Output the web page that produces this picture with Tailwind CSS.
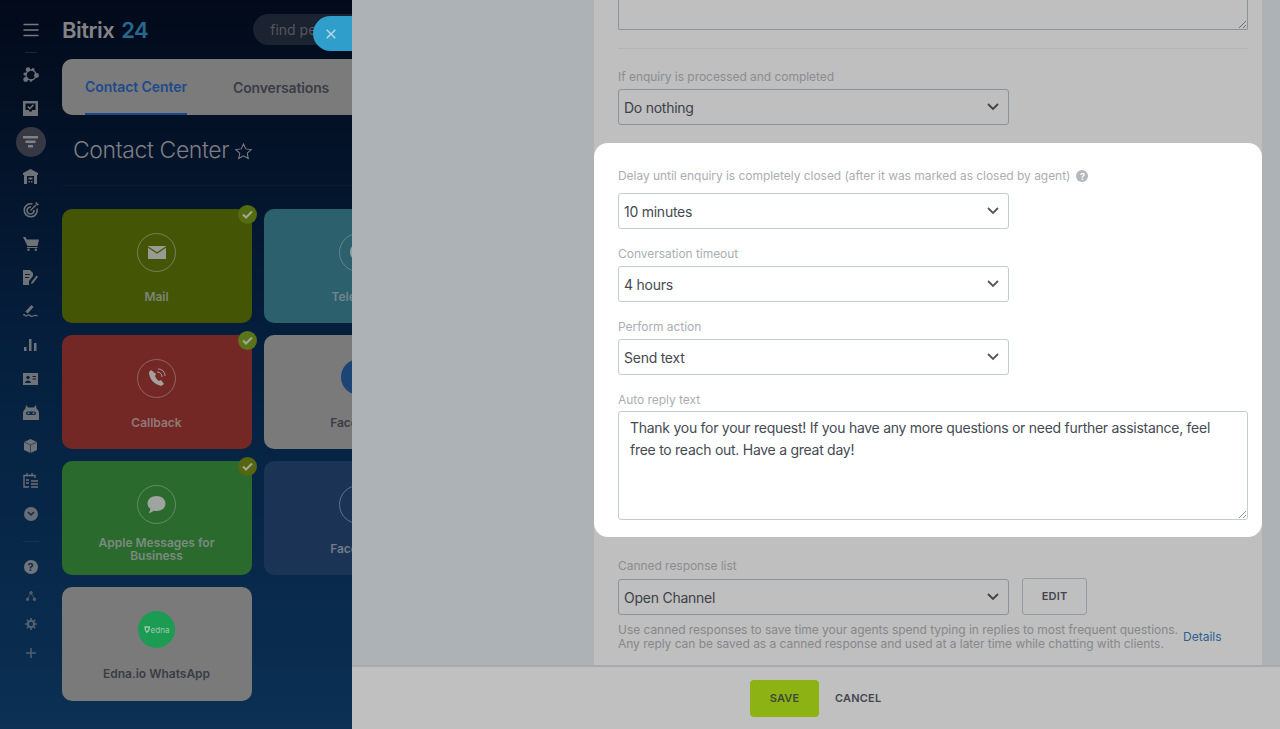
<!DOCTYPE html>
<html lang="en"><head><meta charset="utf-8"><title>Contact Center</title>
<script src="https://cdn.jsdelivr.net/npm/@tailwindcss/browser@4"></script></head>
<body class="m-0 overflow-hidden font-['Inter','Liberation_Sans',sans-serif]">
<div class="flex h-[729px] w-[1280px] overflow-hidden">
  <!-- LEFT dimmed app -->
  <div class="relative flex w-[352px] shrink-0 overflow-hidden bg-gradient-to-b from-[#020a1a] via-[#05203f] to-[#0b3053]">
    <nav class="flex w-[62px] shrink-0 flex-col items-center pr-[1px] text-[#6f7277]">
      <svg class="mt-[23px] h-[14px] w-[16px] shrink-0 text-[#77797e]" viewBox="0 0 16 14" fill="none" stroke="currentColor" stroke-width="1.500"><path d="M.5 1.500h15M.5 7h15M.5 12.500h15"/></svg>
      <div class="mt-[15px] h-px w-[12px] shrink-0 bg-[#20252f]"></div>
      <div class="mt-[5px] flex h-[33.770px] shrink-0 items-center">
        <svg class="h-[16px] w-[16px]" viewBox="0 0 16 16"><circle cx="8" cy="8" r="5" fill="none" stroke="currentColor" stroke-width="1.300"/><g fill="currentColor"><circle cx="5" cy="2.500" r="2.300"/><circle cx="13.500" cy="8.500" r="2.400"/><circle cx="2.700" cy="12.500" r="2.400"/><circle cx="2" cy="7" r="1.600"/><circle cx="10" cy="2.500" r="1.500"/><circle cx="8" cy="13.500" r="1.300"/></g></svg>
      </div>
      <div class="flex h-[33.770px] shrink-0 items-center">
        <svg class="h-[15px] w-[15px]" viewBox="0 0 15 15"><path fill="currentColor" d="M0 0h15v15H0z"/><path fill="#040f20" d="M2.500 2.500h10v6.500h-3.500v1.500h-3V9H2.500z"/><path fill="none" stroke="currentColor" stroke-width="1.600" d="m4.800 5.500 2 2 3.700-3.700"/></svg>
      </div>
      <div class="flex h-[33.770px] shrink-0 items-center">
        <div class="flex h-[30px] w-[30px] items-center justify-center rounded-full bg-[#363944]">
          <svg class="h-[12px] w-[15px]" viewBox="0 0 15 12" fill="#808285"><path d="M0 0h15v2.500H0zM2.500 4.500h10V7h-10zM5 9h5v2.500H5z"/></svg>
        </div>
      </div>
      <div class="flex h-[33.770px] shrink-0 items-center">
        <svg class="h-[15px] w-[15px]" viewBox="0 0 15 15" fill="currentColor"><path fill-rule="evenodd" d="M7.500 0 15 4v2h-1v9H1V6H0V4zM4 7v8h7V7zM5.500 8.500h4v2h-4z"/><path d="M5.500 12h1.500v1.500H5.500zM8 12h1.500v1.500H8z"/></svg>
      </div>
      <div class="flex h-[33.770px] shrink-0 items-center">
        <svg class="h-[16px] w-[16px]" viewBox="0 0 16 16" fill="none" stroke="currentColor" stroke-width="1.600"><path d="M14 6.500A6.500 6.500 0 1 1 9.500 2"/><path d="M11 8a3.500 3.500 0 1 1-3-3"/><path stroke-width="1.300" d="M7.500 8.500 13 3"/><path fill="currentColor" stroke="none" d="M12 1l1 .8.200 1.200L15 3.500 16 2l-1.500-.3L14 0z"/></svg>
      </div>
      <div class="flex h-[33.770px] shrink-0 items-center">
        <svg class="h-[14px] w-[16px]" viewBox="0 0 16 14" fill="currentColor"><path d="M0 0h2.500l1.300 2.500H16L14.500 9H4.500z"/><path d="M4 10h10.500v1H4z"/><circle cx="5.500" cy="12.800" r="1.200"/><circle cx="12.800" cy="12.800" r="1.200"/></svg>
      </div>
      <div class="flex h-[33.770px] shrink-0 items-center">
        <svg class="h-[15px] w-[15px]" viewBox="0 0 15 15" fill="currentColor"><path d="M0 0h7l3 3v3l-4 5v4H0z"/><path fill="#06203e" d="M2 4h5v1H2zM2 7h4v1H2z"/><path d="m8.500 12 5-6.500 1.500 1.200-5 6.500-2 .8z"/></svg>
      </div>
      <div class="flex h-[33.770px] shrink-0 items-center">
        <svg class="h-[14px] w-[15px]" viewBox="0 0 15 14" fill="none" stroke="currentColor"><path stroke-width="3" d="m3.500 8.500 6-6.500"/><path stroke-width="1.200" d="M0 11c1.500-1.500 2 1.500 3.500 1s2-2 3.500-.5 2 1 3.500.3 2.500-.3 4 0"/></svg>
      </div>
      <div class="flex h-[33.770px] shrink-0 items-center">
        <svg class="h-[12px] w-[13px]" viewBox="0 0 13 12" fill="currentColor"><path d="M0 8h2.500v4H0zM5 0h2.500v12H5zM10 4h2.500v8H10z"/></svg>
      </div>
      <div class="flex h-[33.770px] shrink-0 items-center">
        <svg class="h-[12px] w-[15px]" viewBox="0 0 15 12"><path fill="currentColor" d="M0 0h15v12H0z"/><circle cx="5" cy="4.500" r="1.700" fill="#07213f"/><path fill="#07213f" d="M2 10c0-3.500 6-3.500 6 0zM9.500 3H13v1H9.500zM9.500 5.500H13v1H9.500z"/></svg>
      </div>
      <div class="flex h-[33.770px] shrink-0 items-center">
        <svg class="h-[15px] w-[16px]" viewBox="0 0 16 15"><path fill="currentColor" d="M3 0l2.200 2.500h5.600L13 0l.5 3.500C15 4.500 16 6.500 16 8.500V15H0V8.500c0-2 1-4 2.500-5z"/><rect x="3" y="6.500" width="10" height="3.500" rx="1.700" fill="#0a2a4b"/><circle cx="5.500" cy="8.200" r="1" fill="currentColor"/><circle cx="10.500" cy="8.200" r="1" fill="currentColor"/></svg>
      </div>
      <div class="flex h-[33.770px] shrink-0 items-center">
        <svg class="h-[14px] w-[13px]" viewBox="0 0 13 14" fill="currentColor"><path d="M6.500 0 13 3v8l-6.500 3L0 11V3z"/><path fill="none" stroke="#0a2d50" stroke-width=".6" d="m0 3 6.500 3L13 3M6.500 6v8"/></svg>
      </div>
      <div class="flex h-[33.770px] shrink-0 items-center">
        <svg class="h-[15px] w-[15px]" viewBox="0 0 15 15" fill="none" stroke="currentColor" stroke-width="1.300"><path d="M4 0v3.500M9 0v3.500M6 14H1V2.500h11V5"/><path stroke-width="1.500" d="M8 8h7M8 11h7M8 14h7M3 7h3M3 10h3"/></svg>
      </div>
      <div class="flex h-[33.770px] shrink-0 items-center">
        <span class="flex h-[14px] w-[14px] items-center justify-center rounded-full bg-[#676c75]">
          <svg class="h-[6px] w-[8px]" viewBox="0 0 8 6" fill="none" stroke="#0c2b4a" stroke-width="1.500"><path d="m1 1 3 3 3-3"/></svg>
        </span>
      </div>
      <div class="mt-[10px] h-px w-[16px] shrink-0 bg-[#15324f]"></div>
      <div class="mt-[11px] flex h-[28.700px] shrink-0 items-center">
        <span class="flex h-[14px] w-[14px] items-center justify-center rounded-full bg-[#70757c] text-[11px] font-bold leading-none text-[#0a2b4c]">?</span>
      </div>
      <div class="flex h-[28.700px] shrink-0 items-center">
        <svg class="h-[10px] w-[10px] text-[#555f6c]" viewBox="0 0 10 10" fill="currentColor" stroke="currentColor" stroke-width=".7"><circle cx="5" cy="1.800" r="1.400"/><circle cx="1.500" cy="8.300" r="1.400"/><circle cx="8.500" cy="8.300" r="1.400"/><path fill="none" d="M5 2 1.500 8M5 2l3.500 6"/></svg>
      </div>
      <div class="flex h-[28.700px] shrink-0 items-center">
        <svg class="h-[12px] w-[12px] text-[#555f6c]" viewBox="0 0 12 12"><circle cx="6" cy="6" r="3.300" fill="none" stroke="currentColor" stroke-width="2"/><path stroke="currentColor" stroke-width="1.600" d="M6 0v12M0 6h12M1.800 1.800l8.400 8.400M10.200 1.800l-8.400 8.400"/><circle cx="6" cy="6" r="2" fill="#0b2c4d"/></svg>
      </div>
      <div class="flex h-[28.700px] shrink-0 items-center">
        <svg class="h-[10px] w-[10px] text-[#555f6c]" viewBox="0 0 10 10" stroke="currentColor" stroke-width="1.500"><path d="M5 0v10M0 5h10"/></svg>
      </div>
    </nav>
    <main class="w-[290px] shrink-0">
      <header class="flex h-[59px] items-center">
        <span class="text-[22px] font-semibold leading-none tracking-[-0.5px] text-[#838486]">Bitrix</span>
        <span class="ml-[7px] text-[22px] font-semibold leading-none tracking-[-0.5px] text-[#266a8d]">24</span>
        <svg class="ml-[10px] h-[10px] w-[13px]" viewBox="0 0 12 10" fill="none" stroke="#6f7174"><path d="M0 2.500h12M0 7.500h12"/><circle cx="8" cy="2.500" r="1.300" fill="#071122"/><circle cx="4" cy="7.500" r="1.300" fill="#071122"/></svg>
        <div class="ml-[95px] flex h-[31px] w-[120px] shrink-0 items-center rounded-full bg-[#1b2230] pl-[17px] text-[14px] text-[#55585f]">find people</div>
      </header>
      <div class="flex h-[56px] items-start rounded-l-[10px] bg-[#7b7b7b]">
        <div class="ml-[23px] flex h-[56px] w-[102px] items-center justify-center whitespace-nowrap border-b-2 border-[#1b4689] text-[14px] font-semibold tracking-[-0.06px] text-[#1f4a8b]">Contact Center</div>
        <div class="ml-[46px] flex h-[56px] items-center text-[14px] font-semibold tracking-[-0.15px] text-[#393d46]">Conversations</div>
      </div>
      <div class="flex h-[71px] items-center border-b border-[#0f1a2c] pl-[11px] text-[#7d7f82]">
        <span class="text-[23px] font-light leading-none tracking-[-0.4px]">Contact Center</span>
        <svg class="ml-[5px] mt-[2px] h-[19px] w-[19px]" viewBox="0 0 24 24" fill="none" stroke="currentColor" stroke-width="1.300"><path d="m12 2.500 2.900 6.200 6.800.8-5 4.600 1.300 6.700-6-3.300-6 3.300 1.300-6.700-5-4.600 6.800-.8z"/></svg>
      </div>
      <div class="mt-[23px] grid w-[392px] grid-cols-[190px_190px] gap-x-[12px] gap-y-[12.500px]">
        <div class="relative flex h-[113.500px] flex-col items-center rounded-[10px] bg-[#445606] pr-[1px] pt-[23.500px] text-[#7f8375]">
          <div class="flex h-[39px] w-[39px] items-center justify-center rounded-full border border-[#75805a]"><svg class="h-[13px] w-[18px]" viewBox="0 0 18 13"><path fill="#999a92" d="M0 0h18v13H0z"/><path fill="none" stroke="#445606" stroke-width="1.200" d="m0 1 9 6 9-6"/></svg></div>
          <span class="mt-[18px] text-[12px] font-semibold leading-[13px]">Mail</span>
          <span class="absolute right-[-5px] top-[-4px] flex h-[19px] w-[19px] items-center justify-center rounded-full bg-[#546b10]"><svg class="h-[9px] w-[11px]" viewBox="0 0 11 9" fill="none" stroke="#a5a796" stroke-width="2"><path d="m1 4.500 3 3 6-6"/></svg></span>
        </div>
        <div class="relative flex h-[113.500px] flex-col items-center rounded-[10px] bg-[#2b606c] pr-[1px] pt-[23.500px] text-[#74858b]">
          <div class="flex h-[39px] w-[39px] items-center justify-center rounded-full border border-[#5f8791]"><svg class="h-[18px] w-[18px]" viewBox="0 0 18 18"><circle cx="9" cy="9" r="9" fill="#90a3a8"/></svg></div>
          <span class="mt-[18px] text-[12px] font-semibold leading-[13px]">Telegram</span>
        </div>
        <div class="relative flex h-[113.500px] flex-col items-center rounded-[10px] bg-[#742826] pr-[1px] pt-[23.500px] text-[#8f7a78]">
          <div class="flex h-[39px] w-[39px] items-center justify-center rounded-full border border-[#8f6664]"><svg class="h-[20px] w-[20px]" viewBox="0 0 20 20"><path fill="#a79f9f" d="M4 2 2 4c0 7 5 12 12 14l3-2-3-4-2 1c-2-1-3-3-4-5l1-2z"/><path fill="none" stroke="#a79f9f" stroke-width="1" d="M10 4c3 0 5 2 5 5M11 1c4 0 7 3 7 7"/></svg></div>
          <span class="mt-[18px] text-[12px] font-semibold leading-[13px]">Callback</span>
          <span class="absolute right-[-5px] top-[-4px] flex h-[19px] w-[19px] items-center justify-center rounded-full bg-[#5a7419]"><svg class="h-[9px] w-[11px]" viewBox="0 0 11 9" fill="none" stroke="#a5a796" stroke-width="2"><path d="m1 4.500 3 3 6-6"/></svg></span>
        </div>
        <div class="relative flex h-[113.500px] flex-col items-center rounded-[10px] bg-[#7a7a7a] pr-[1px] pt-[23.500px] text-[#393d46]">
          <div class="flex h-[36px] w-[36px] items-center justify-center rounded-full bg-[#1c4474]"></div>
          <span class="mt-[21px] whitespace-nowrap text-[12px] font-semibold leading-[13px]">Facebook</span>
        </div>
        <div class="relative flex h-[113.500px] flex-col items-center rounded-[10px] bg-[#2a6a2c] pr-[1px] pt-[23.500px] text-[#7a8b80]">
          <div class="flex h-[39px] w-[39px] items-center justify-center rounded-full border border-[#648c68]"><svg class="h-[19px] w-[19px]" viewBox="0 0 19 19"><path fill="#9ea49f" d="M9.500 1c5 0 9 3 9 7.500S14.500 16 9.500 16c-1 0-2 0-3-.3C5 17 3 18 1.500 18c1-1 2-3 1.800-4.300C1.500 12.500.5 10.500.5 8.500.5 4 4.500 1 9.500 1z"/></svg></div>
          <span class="mt-[12px] w-[130px] text-center text-[12px] font-semibold leading-[13px]">Apple Messages for Business</span>
          <span class="absolute right-[-5px] top-[-4px] flex h-[19px] w-[19px] items-center justify-center rounded-full bg-[#56650f]"><svg class="h-[9px] w-[11px]" viewBox="0 0 11 9" fill="none" stroke="#a5a796" stroke-width="2"><path d="m1 4.500 3 3 6-6"/></svg></span>
        </div>
        <div class="relative flex h-[113.500px] flex-col items-center rounded-[10px] bg-[#1b3456] pr-[1px] pt-[23.500px] text-[#757c88]">
          <div class="flex h-[39px] w-[39px] items-center justify-center rounded-full border border-[#5f7290]"></div>
          <span class="mt-[18px] whitespace-nowrap text-[12px] font-semibold leading-[13px]">Facebook</span>
        </div>
        <div class="relative flex h-[113.500px] flex-col items-center rounded-[10px] bg-[#7a7a7a] pr-[1px] pt-[24px] text-[#393d46]">
          <div class="flex h-[37px] w-[37px] items-center justify-center gap-[1px] rounded-full bg-[#1c9b52] text-[8px] leading-none text-[#9cc9ae]"><svg class="h-[7px] w-[6px]" viewBox="0 0 6 7" fill="none" stroke="#9cc9ae" stroke-width="1.300"><path d="M1 1h4.300c0 3-1 4.500-2.500 5.300C1.500 5 1 3.500 1 1z"/></svg><span>edna</span></div>
          <span class="mt-[19px] text-[12px] font-semibold leading-[13px]">Edna.io WhatsApp</span>
        </div>
      </div>
    </main>
    <button class="absolute left-[313px] top-[16px] flex h-[35px] w-[39px] items-center justify-center rounded-l-full bg-[#2f9ecb] pr-[3px]">
      <svg class="h-[10px] w-[10px]" viewBox="0 0 10 10" stroke="#b6dcec" stroke-width="1.400"><path d="m.7.7 8.600 8.600M9.300.7.700 9.300"/></svg>
    </button>
  </div>
  <!-- RIGHT slider -->
  <div class="flex w-[928px] shrink-0 flex-col bg-[#adb2b6]">
    <div class="ml-[242px] h-[665px] w-[668px] shrink-0 overflow-hidden bg-[#bfbfbf]">
      <div class="pl-[24px] pr-[14px]">
        <div class="relative h-[30px] rounded-b-[2px] border-x border-b border-[#8e9398]">
          <svg class="absolute bottom-0 right-0 h-[9px] w-[9px]" viewBox="0 0 9 9" stroke="#5b5f66" stroke-width=".8"><path d="m1 8 7-7M5 8l3-3"/></svg>
        </div>
        <div class="mt-[18px] h-px bg-[#b5b5b5]"></div>
        <div class="mt-[21px] text-[12px] leading-[14px] tracking-[-0.04px] text-[#8b8d8f]">If enquiry is processed and completed</div>
        <div class="mt-[5px] flex h-[36px] w-[391px] items-center justify-between rounded-[3px] border border-[#8d9297] pl-[5px] pr-[9px] text-[14px] tracking-[-0.25px] text-[#3c4149]">
          <span>Do nothing</span>
          <svg class="h-[8px] w-[12px]" viewBox="0 0 12 8" fill="none" stroke="#3f444c" stroke-width="1.800"><path d="m1 1 5 5 5-5"/></svg>
        </div>
      </div>
      <section class="mt-[18px] h-[394px] rounded-[14px] bg-white pl-[24px] pr-[14px] pt-[26px]">
        <div class="flex h-[14px] items-center text-[12px] leading-[14px] tracking-[-0.04px] text-[#aaaeb2]">
          <span>Delay until enquiry is completely closed (after it was marked as closed by agent)</span>
          <span class="ml-[6px] flex h-[12px] w-[12px] items-center justify-center rounded-full bg-[#b4b7bb] text-[9px] font-bold leading-none text-white">?</span>
        </div>
        <div class="mt-[10px] flex h-[36px] w-[391px] items-center justify-between rounded-[3px] border border-[#c6cbd0] pl-[5px] pr-[9px] text-[14px] tracking-[-0.25px] text-[#454a52]">
          <span>10 minutes</span>
          <svg class="h-[8px] w-[12px]" viewBox="0 0 12 8" fill="none" stroke="#525860" stroke-width="1.800"><path d="m1 1 5 5 5-5"/></svg>
        </div>
        <div class="mt-[18px] text-[12px] leading-[14px] tracking-[-0.04px] text-[#aaaeb2]">Conversation timeout</div>
        <div class="mt-[5px] flex h-[36px] w-[391px] items-center justify-between rounded-[3px] border border-[#c6cbd0] pl-[5px] pr-[9px] text-[14px] tracking-[-0.25px] text-[#454a52]">
          <span>4 hours</span>
          <svg class="h-[8px] w-[12px]" viewBox="0 0 12 8" fill="none" stroke="#525860" stroke-width="1.800"><path d="m1 1 5 5 5-5"/></svg>
        </div>
        <div class="mt-[18px] text-[12px] leading-[14px] tracking-[-0.04px] text-[#aaaeb2]">Perform action</div>
        <div class="mt-[5px] flex h-[36px] w-[391px] items-center justify-between rounded-[3px] border border-[#c6cbd0] pl-[5px] pr-[9px] text-[14px] tracking-[-0.25px] text-[#454a52]">
          <span>Send text</span>
          <svg class="h-[8px] w-[12px]" viewBox="0 0 12 8" fill="none" stroke="#525860" stroke-width="1.800"><path d="m1 1 5 5 5-5"/></svg>
        </div>
        <div class="mt-[18px] text-[12px] leading-[14px] tracking-[-0.04px] text-[#aaaeb2]">Auto reply text</div>
        <div class="relative mt-[4px] h-[109px] rounded-[3px] border border-[#c6cbd0] px-[11px] pt-[5px] text-[14px] leading-[22px] tracking-[-0.27px] text-[#454a52]">
          Thank you for your request! If you have any more questions or need further assistance, feel free to reach out. Have a great day!
          <svg class="absolute bottom-0 right-0 h-[9px] w-[9px]" viewBox="0 0 9 9" stroke="#6f747b" stroke-width=".8"><path d="m1 8 7-7M5 8l3-3"/></svg>
        </div>
      </section>
      <div class="pl-[24px] pr-[14px]">
        <div class="mt-[22px] text-[12px] leading-[14px] tracking-[-0.04px] text-[#8b8d8f]">Canned response list</div>
        <div class="mt-[5px] flex items-end gap-[13px]">
          <div class="flex h-[36px] w-[391px] items-center justify-between rounded-[3px] border border-[#8d9297] pl-[5px] pr-[9px] text-[14px] tracking-[-0.25px] text-[#3c4149]">
            <span>Open Channel</span>
            <svg class="h-[8px] w-[12px]" viewBox="0 0 12 8" fill="none" stroke="#3f444c" stroke-width="1.800"><path d="m1 1 5 5 5-5"/></svg>
          </div>
          <div class="flex h-[37px] w-[65px] items-center justify-center rounded-[3px] border border-[#979a9e] text-[11px] font-semibold tracking-[0.2px] text-[#42464e]">EDIT</div>
        </div>
        <div class="mt-[8px] flex items-center">
          <p class="w-[565px] shrink-0 whitespace-nowrap text-[12px] leading-[14px] tracking-[-0.04px] text-[#85888b]">Use canned responses to save time your agents spend typing in replies to most frequent questions.<br>Any reply can be saved as a canned response and used at a later time while chatting with clients.</p>
          <a class="text-[12px] text-[#2f5f8f]">Details</a>
        </div>
      </div>
    </div>
    <footer class="flex h-[64px] items-start border-t-2 border-[#a9a9ab] bg-[#c0c0c0] pl-[398px] pt-[13px]">
      <div class="flex h-[37px] w-[69px] items-center justify-center rounded-[4px] bg-[#8cb213] text-[11px] font-semibold tracking-[0.2px] text-[#3f4a3a]">SAVE</div>
      <div class="ml-[16px] flex h-[37px] items-center text-[11px] font-semibold tracking-[0.2px] text-[#42464e]">CANCEL</div>
    </footer>
  </div>
</div>
</body></html>
